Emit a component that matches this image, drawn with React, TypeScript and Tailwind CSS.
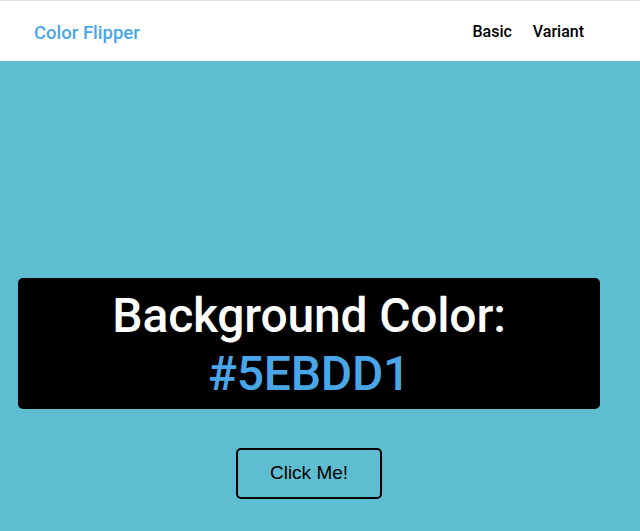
import React from "react";

export default function App() {
  return (
    <div className="min-h-[531px] bg-[#5ebdd1] font-['Roboto',sans-serif]">
      <div className="h-px bg-[#dcdcdc]" />
      <nav className="h-[60px] bg-white flex items-center justify-between pl-[34px] pr-[56px]">
        <h4 className="text-[18.5px] leading-[28px] pt-[3px] font-medium text-[#49a6e9]">Color Flipper</h4>
        <ul className="flex items-center gap-[21px] text-[16px] leading-[24px] font-medium text-black pt-[2px]">
          <li>Basic</li>
          <li>Variant</li>
        </ul>
      </nav>
      <main className="pt-[217px] pl-[18px]">
        <div className="w-[582px] flex flex-col items-center">
          <div className="w-full bg-black rounded-[5px] pt-[9px] pb-[7px] text-center text-[48px] leading-[1.2] font-medium text-white tracking-[-0.2px]">
            <span className="block">Background Color:</span>
            <span className="block text-[#49a6e9]">#5EBDD1</span>
          </div>
          <button className="mt-[39px] w-[146px] h-[51px] border-2 border-black rounded-[5px] text-[19px] text-black font-['Liberation_Sans',Arial,sans-serif]">
            Click Me!
          </button>
        </div>
      </main>
    </div>
  );
}
